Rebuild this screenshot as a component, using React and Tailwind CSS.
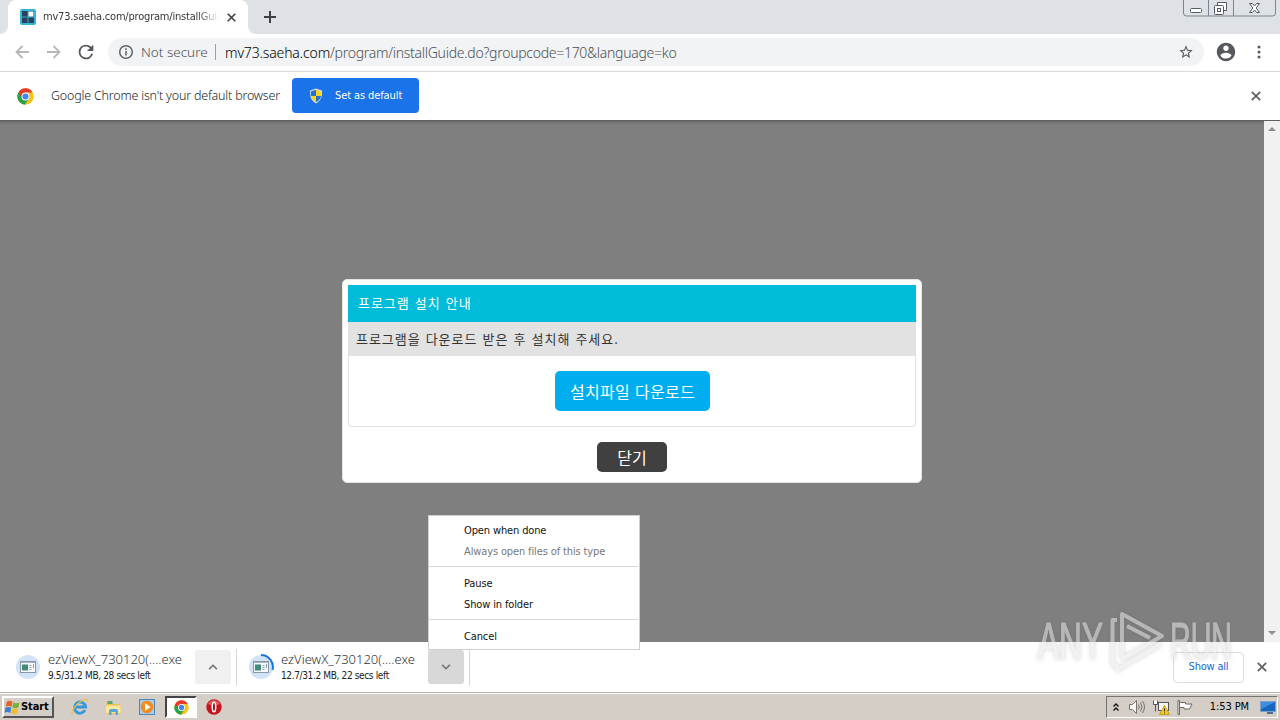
import React from 'react';

const ui = "font-['DejaVu_Sans_Condensed','Noto_Sans',sans-serif]";
const light = "font-['Noto_Sans','Open_Sans',sans-serif] font-light";
const korean = "font-['Noto_Sans_CJK_KR',sans-serif]";

const CloseIcon = ({ size = 10, color = '#5f6368', width = 1.8 }) => (
  <svg width={size} height={size} viewBox="0 0 10 10" fill="none" stroke={color} strokeWidth={width}>
    <path d="M.8.8 9.2 9.2M9.2.8.8 9.2" />
  </svg>
);

const ChromeLogo = ({ size = 17 }) => (
  <svg width={size} height={size} viewBox="0 0 24 24">
    <circle cx="12" cy="12" r="11.5" fill="#fbc116" />
    <path d="M12 12 2 6.3A11.5 11.5 0 0 0 11 23.5L17 14.8Z" fill="#28a249" />
    <path d="M12 6.5H22.1A11.5 11.5 0 0 0 2 6.2L7.3 14.7Z" fill="#e33b2e" />
    <circle cx="12" cy="12" r="5.6" fill="#fff" />
    <circle cx="12" cy="12" r="4.3" fill="#4285f4" />
  </svg>
);

const ShieldIcon = () => (
  <svg width="14" height="16" viewBox="0 0 14 16">
    <path d="M7 .5 13 2.5C13.5 9 11.5 13 7 15.5 2.5 13 .5 9 1 2.5Z" fill="#d5dbe0" />
    <path d="M7 1.8V8H1.9C1.7 6.4 1.8 5 1.9 3.5Z" fill="#2a70c8" />
    <path d="M7 1.8 12.1 3.5C12.2 5 12.3 6.4 12.1 8H7Z" fill="#f5d429" />
    <path d="M1.9 8H7V14.2C4.2 12.6 2.4 10.8 1.9 8Z" fill="#f5d429" />
    <path d="M7 8H12.1C11.6 10.8 9.8 12.6 7 14.2Z" fill="#2a70c8" />
  </svg>
);

const TabStrip = () => (
  <div className="flex h-[34px] bg-[#dee1e6]">
    <div className="w-2 bg-white">
      <div className="h-full rounded-br-lg bg-[#dee1e6]" />
    </div>
    <div className="flex w-[240px] items-center rounded-t-lg bg-white pl-3">
      <svg width="16" height="16" viewBox="0 0 16 16">
        <rect width="16" height="16" rx="2" fill="#35b6d8" />
        <rect x="2" y="2" width="12" height="12" fill="#27445c" />
        <path d="M8 2v12M2 8h12" stroke="#35a5c5" strokeWidth="1" />
        <rect x="8.5" y="2.5" width="5" height="5" fill="#fff" />
      </svg>
      <span className={`ml-[7px] w-[176px] overflow-hidden whitespace-nowrap pt-px text-[11px] tracking-[-0.2px] text-[#333639] [mask-image:linear-gradient(to_right,#000_88%,transparent)] ${ui}`}>
        mv73.saeha.com/program/installGuide.do
      </span>
      <span className="ml-2"><CloseIcon size={9} color="#3c4043" /></span>
    </div>
    <div className="w-2 bg-white">
      <div className="h-full rounded-bl-lg bg-[#dee1e6]" />
    </div>
    <svg className="ml-2 mt-[11px]" width="12" height="12" viewBox="0 0 12 12" stroke="#3c4043" strokeWidth="2">
      <path d="M6 0v12M0 6h12" />
    </svg>
    <svg className="ml-auto mr-[3px]" width="94" height="17" viewBox="0 0 94 17" fill="none" stroke="#7c838e">
      <path d="M.5 0v13q0 3 3 3h86q3 0 3-3V0M25.500 0v16M50.500 0v16" />
      <g stroke="#555b66">
        <rect x="7.500" y="8.500" width="11" height="4" rx="1" fill="#fff" />
        <path d="M34.500 5.500V2.500h9v8h-3" fill="#fff" />
        <rect x="31.500" y="5.500" width="9" height="9" rx="1" fill="#fff" />
        <rect x="34.500" y="8.500" width="3" height="3" />
        <path d="M66.500 3.500h3l2 2.500 2-2.500h3l-3.300 4.500 3.300 4.500h-3l-2-2.500-2 2.500h-3l3.300-4.500Z" fill="#fff" />
      </g>
    </svg>
  </div>
);

const Toolbar = () => (
  <div className="flex h-[38px] items-center border-b border-[#d8d9dc] bg-white pl-[15px] pb-px">
    <svg width="14" height="14" viewBox="0 0 14 14" fill="none" stroke="#b5b7b9" strokeWidth="1.8">
      <path d="M14 7H1.500M7.500 1 1.500 7l6 6" />
    </svg>
    <svg className="ml-[18px]" width="14" height="14" viewBox="0 0 14 14" fill="none" stroke="#b5b7b9" strokeWidth="1.8">
      <path d="M0 7h12.500M6.500 1l6 6-6 6" />
    </svg>
    <svg className="ml-[14px]" width="22" height="22" viewBox="0 0 24 24" fill="#55585c">
      <path d="M17.650 6.350A7.960 7.960 0 0 0 12 4a8 8 0 1 0 7.730 10h-2.080A6 6 0 1 1 12 6c1.660 0 3.140.69 4.220 1.780L13 11h7V4z" />
    </svg>
    <div className="ml-[11px] flex h-7 w-[1096px] items-center rounded-full bg-[#f1f3f4] pl-[10px] pr-[10px]">
      <svg width="16" height="16" viewBox="0 0 16 16" fill="none" stroke="#5f6368" strokeWidth="1.500">
        <circle cx="8" cy="8" r="6.300" />
        <path d="M8 7v4.500M8 4.300v1.700" />
      </svg>
      <span className={`ml-[7px] w-[68px] whitespace-nowrap text-[13.500px] text-[#4c5054] ${light}`}>Not secure</span>
      <div className="ml-[6px] h-4 w-px bg-[#9aa0a6]" />
      <span className={`ml-[9px] whitespace-nowrap text-[14px] tracking-[-0.28px] text-[#4c5054] ${light}`}>
        <span className="tracking-[-0.14px] text-black">mv73.saeha.com</span>/program/installGuide.do?groupcode=170&amp;language=ko
      </span>
      <svg className="ml-auto" width="16" height="16" viewBox="0 0 24 24" fill="#55585c">
        <path d="M22 9.240l-7.190-.62L12 2 9.190 8.630 2 9.240l5.460 4.730L5.820 21 12 17.270 18.180 21l-1.630-7.030L22 9.240zM12 15.400l-3.760 2.270 1-4.280-3.320-2.880 4.380-.38L12 6.100l1.710 4.040 4.380.38-3.320 2.880 1 4.280L12 15.400z" />
      </svg>
    </div>
    <svg className="ml-[11px]" width="22" height="22" viewBox="0 0 24 24" fill="#55585c">
      <path d="M12 2C6.480 2 2 6.480 2 12s4.480 10 10 10 10-4.480 10-10S17.520 2 12 2zm0 3c1.660 0 3 1.340 3 3s-1.340 3-3 3-3-1.340-3-3 1.340-3 3-3zm0 14.200a7.200 7.200 0 0 1-6-3.220c.03-1.990 4-3.080 6-3.080s5.970 1.090 6 3.080a7.200 7.200 0 0 1-6 3.220z" />
    </svg>
    <svg className="ml-[20px]" width="4" height="14" viewBox="0 0 4 14" fill="#55585c">
      <circle cx="2" cy="2" r="1.500" />
      <circle cx="2" cy="7" r="1.500" />
      <circle cx="2" cy="12" r="1.500" />
    </svg>
  </div>
);

const InfoBar = () => (
  <div className="flex h-[48px] items-center bg-white pl-[17px] pr-[19px]">
    <ChromeLogo />
    <span className={`ml-[17px] w-[229px] whitespace-nowrap text-[12.5px] tracking-[-0.2px] text-[#202326] ${light}`}>
      Google Chrome isn't your default browser
    </span>
    <button className={`-mt-px ml-[12px] flex h-[35px] w-[127px] items-center rounded bg-[#1a73e8] pl-[17px] text-[11px] text-white ${ui}`}>
      <ShieldIcon />
      <span className="ml-3 whitespace-nowrap pt-px tracking-[-0.1px]">Set as default</span>
    </button>
    <span className="ml-auto"><CloseIcon /></span>
  </div>
);

const InstallDialog = () => (
  <div className={`h-[204px] w-[580px] rounded-[5px] border border-[#e4e4e4] bg-white px-[5px] pt-[5px] ${korean}`}>
    <div className="flex h-[37px] items-center bg-[#00bcd8] pb-px pl-[10px] text-[13px] tracking-[0.95px] text-white [word-spacing:1.3px]">
      프로그램 설치 안내
    </div>
    <div className="h-[105px] rounded-b-sm border border-t-0 border-[#e1e1e1]">
      <div className="flex h-[34px] items-center bg-[#e2e2e2] pb-px pl-[7px] text-[13px] tracking-[0.95px] text-[#333] [word-spacing:1.3px]">
        프로그램을 다운로드 받은 후 설치해 주세요.
      </div>
      <button className="mx-auto mt-[15px] block h-[40px] w-[155px] rounded-[5px] bg-[#00aeef] pl-px text-[16px] tracking-[0.3px] text-white [word-spacing:1px]">
        설치파일 다운로드
      </button>
    </div>
    <button className="mx-auto mt-[15px] block h-[30px] w-[70px] rounded-[5px] bg-[#404040] text-[16px] leading-[30px] text-white">
      닫기
    </button>
  </div>
);

const Page = () => (
  <div className="flex h-[522px] border-t border-[#606060] bg-[#7f7f7f]">
    <div className="flex flex-1 items-center justify-center pb-px shadow-[inset_0_3px_3px_-2px_#606060]">
      <InstallDialog />
    </div>
    <div className="flex w-4 flex-col items-center justify-between bg-[#f1f1f1] pb-[7px] pt-[6px]">
      <svg width="8" height="4" viewBox="0 0 8 4" fill="#8d8d8d"><path d="M0 4 4 0l4 4Z" /></svg>
      <svg width="8" height="4" viewBox="0 0 8 4" fill="#8d8d8d"><path d="M0 0h8L4 4Z" /></svg>
    </div>
  </div>
);

const Download = ({ progress, arc, open }) => (
  <div className="flex h-full items-center">
    <svg width="26" height="26" viewBox="0 0 26 26" fill="none">
      <circle cx="13" cy="13" r="12" fill="#d2e3f8" />
      <path d={arc} stroke="#1a73e8" strokeWidth="2" />
      <rect x="5.500" y="7.500" width="15" height="11" fill="#f7fafb" stroke="#8b98a5" />
      <path d="M6 8.500h14" stroke="#a5b3c2" />
      <rect x="7" y="10.500" width="6" height="6" fill="#448a79" />
      <path d="M14.500 11.500h2M14.500 13.500h2M14.500 15.500h2M18.500 10v4" stroke="#8d9eae" />
    </svg>
    <div className="ml-[7px] w-[147px]">
      <div className={`whitespace-nowrap text-[13px] leading-[16px] text-[#303336] ${light}`}>ezViewX_730120(....exe</div>
      <div className={`whitespace-nowrap text-[10px] leading-[17px] tracking-[-0.36px] text-[#202124] ${ui}`}>{progress}</div>
    </div>
    <div className={`flex h-[34px] w-9 items-center justify-center rounded-[3px] ${open ? 'bg-[#d8d8d8]' : 'bg-[#f0f0f0]'}`}>
      <svg width="10" height="6" viewBox="0 0 11 7" fill="none" stroke="#707376" strokeWidth="1.800">
        <path d={open ? 'M1 1l4.500 4.500L10 1' : 'M1 6l4.500-4.500L10 6'} />
      </svg>
    </div>
  </div>
);

const DownloadShelf = () => (
  <div className="flex h-[50px] items-center bg-white pl-[15px]">
    <Download progress="9.5/31.2 MB, 28 secs left" />
    <div className="ml-[5px] mr-[11px] h-[37px] w-px bg-[#d5d5d5]" />
    <Download progress="12.7/31.2 MB, 22 secs left" arc="M13 1a12 12 0 0 1 11.500 15" open />
    <div className="ml-[5px] h-[37px] w-px bg-[#d5d5d5]" />
    <button className={`ml-auto h-[31px] w-[71px] rounded border border-[#dadce0] pt-px text-[11px] tracking-[-0.2px] text-[#1967d2] ${ui}`}>
      Show all
    </button>
    <span className="ml-[13px] mr-[13px]"><CloseIcon /></span>
  </div>
);

const menuGroups = [
  [{ label: 'Open when done' }, { label: 'Always open files of this type', disabled: true }],
  [{ label: 'Pause' }, { label: 'Show in folder' }],
  [{ label: 'Cancel' }],
];

const DownloadMenu = () => (
  <div className={`absolute left-[428px] top-[515px] h-[135px] w-[212px] border border-[#cfcfcf] bg-white text-[11px] tracking-[-0.13px] ${ui}`}>
    {menuGroups.map((group, i) => (
      <div key={i} className={i > 0 ? 'mr-px border-t border-[#d6d6d6] pt-[6px] pb-[4px]' : 'pt-[4px] pb-[4px]'}>
        {group.map(item => (
          <div key={item.label} className={`h-[21px] whitespace-nowrap pl-[35px] leading-[21px] ${item.disabled ? 'text-[#777]' : 'text-[#111]'}`}>
            {item.label}
          </div>
        ))}
      </div>
    ))}
  </div>
);

const Taskbar = () => (
  <div className={`flex h-[28px] items-center border-t border-[#b9b5af] bg-[#d5cec6] pl-[2px] shadow-[inset_0_1px_0_#fff] ${ui}`}>
    <button className="mt-px flex h-[22px] w-[52px] items-center border-2 border-b-[#555] border-l-white border-r-[#555] border-t-white text-[11px] font-bold text-black">
      <svg width="17" height="17" viewBox="0 0 15 15">
        <path d="M2.500 2.500Q5 .8 7.500 2.500L6.600 7Q4 5.400 1.500 6.900Z" fill="#e8622a" />
        <path d="M8.200 2.900q2.500 1.500 5.500 0L12.700 7.400q-2.800 1.400-5.300-.2Z" fill="#75b43c" />
        <path d="M1.300 7.700q2.600-1.500 5.100.1L5.500 12.300Q3 10.700.4 12.200Z" fill="#3a7fd0" />
        <path d="M7.200 8q2.600 1.600 5.300.2L11.500 12.700q-2.800 1.400-5.300-.3Z" fill="#f4bc2c" />
      </svg>
      <span className="tracking-[-0.1px]">Start</span>
    </button>
    <svg className="ml-[17px]" width="18" height="18" viewBox="0 0 18 18" fill="none">
      <path d="M14 12.200A5.600 5.600 0 1 1 14.600 9H5" stroke="#3298dc" strokeWidth="2.800" />
      <path d="M1.500 16.200C-1 13.500 5 6 11 2.800 15 .5 17.700 1.200 16.500 4" stroke="#eec044" strokeWidth="1.300" />
    </svg>
    <svg className="ml-[16px] mt-[2px]" width="17" height="16" viewBox="0 0 17 16">
      <path d="M1 2.500h5l1 1.500h8.500V14H1Z" fill="#e9c45c" />
      <path d="M2.500 1h5v3h-5Z" fill="#59a96c" />
      <path d="M1 5.500h14.500V13H1Z" fill="#f9e6a0" />
      <path d="M4 15v-4q0-2 2-2h5q2 0 2 2v4h-2.500v-3h-4v3Z" fill="#58a9d9" />
    </svg>
    <svg className="ml-[17px]" width="16" height="16" viewBox="0 0 16 16">
      <rect x=".5" y=".5" width="15" height="15" fill="#a9cde8" stroke="#4f88b8" />
      <circle cx="8" cy="8" r="6.200" fill="#f28a1a" />
      <path d="M6 4.300 11.700 8 6 11.700Z" fill="#fff" />
    </svg>
    <div className="ml-[10px] mt-px flex h-[22px] w-[32px] items-center justify-center border-2 border-b-white border-l-[#444] border-r-white border-t-[#444] bg-white">
      <ChromeLogo size={15} />
    </div>
    <svg className="ml-[9px] mt-px" width="16" height="16" viewBox="0 0 16 16">
      <circle cx="8" cy="8" r="7.700" fill="#c41420" />
      <path d="M2 5a6.700 6.700 0 0 1 12 0Q8 8 2 5Z" fill="#e05a5a" />
      <ellipse cx="8" cy="8" rx="1.700" ry="4.800" fill="#9d0912" stroke="#fff" strokeWidth="1.500" />
    </svg>
    <div className="ml-auto mr-[2px] mt-px flex h-[22px] w-[172px] items-center border border-b-white border-l-[#77736e] border-r-white border-t-[#77736e] pl-[6px]">
      <svg width="6" height="9" viewBox="0 0 6 9" fill="none" stroke="#111" strokeWidth="1.300">
        <path d="M.5 3.500 3 1l2.500 2.500M.5 7.500 3 5l2.500 2.500" />
      </svg>
      <svg className="ml-[10px]" width="17" height="14" viewBox="0 0 17 14" fill="none" stroke="#77746f">
        <path d="M.5 4.500h3l4-4v13l-4-4h-3Z" fill="#fafafa" />
        <path d="M9.500 4.500q1.600 2.500 0 5M11.500 2.500q3 4.500 0 9M13.500 1q4 6 0 12" />
      </svg>
      <svg className="ml-[7px]" width="17" height="15" viewBox="0 0 17 15" fill="none" stroke="#555">
        <rect x="5.500" y="2.500" width="10" height="8" fill="#f4f4f4" />
        <path d="M7.500 13.500h5M10 11v2" />
        <path d="M.5.500v4h4v-4M2.500 4.500v7" stroke="#555" fill="#fff" />
        <path d="M11.500 5.500 16.500 14.500h-10Z" fill="#f6cc24" stroke="#c89c12" />
        <path d="M11.500 8.500v3M11.500 12.500v1" stroke="#222" />
      </svg>
      <svg className="ml-[7px]" width="16" height="15" viewBox="0 0 16 15" stroke="#6d6a66" fill="#fff">
        <path d="M1 .5h1.500v14H1Z" />
        <path d="M2.500 2.500h6v1.500h6.500l-2.500 5H7V7.500H2.500Z" />
      </svg>
      <span className="ml-auto whitespace-nowrap pt-px text-[11px] tracking-[-0.1px] text-black">1:53 PM</span>
      <svg className="ml-[11px] mr-px" width="16" height="13" viewBox="0 0 16 13">
        <rect x=".5" y=".5" width="15" height="10" fill="#1866bd" stroke="#7ba2c8" />
        <path d="M1 1h14L1 8Z" fill="#3e8fdd" />
        <path d="M7 12h6" stroke="#4e6d8c" strokeWidth="2" />
      </svg>
    </div>
  </div>
);

const Watermark = () => (
  <svg className="pointer-events-none absolute left-[1030px] top-[602px] opacity-55 drop-shadow-[0_0_2px_rgba(90,90,90,0.45)]" width="215" height="76" viewBox="0 0 215 76" fill="#e6e6e6">
    <g fontFamily="'Liberation Sans Narrow','Liberation Sans',sans-serif" fontSize="51" stroke="#e6e6e6" strokeWidth="1.2">
      <text x="8" y="57" textLength="65" lengthAdjust="spacingAndGlyphs">ANY</text>
      <text x="140" y="57" textLength="62" lengthAdjust="spacingAndGlyphs">RUN</text>
    </g>
    <g fill="none" stroke="#e6e6e6" strokeWidth="4" strokeLinejoin="round">
      <path d="M87 18h-4.500v44l4 2" />
      <path d="M97 24l23 12M92 57V12L132 34 92 57" />
      <path d="M87 62v6L131 42" />
    </g>
  </svg>
);

const App = () => {
  return (
    <div className="relative h-[720px] w-[1280px] overflow-hidden bg-white">
      <TabStrip />
      <Toolbar />
      <InfoBar />
      <Page />
      <DownloadShelf />
      <Taskbar />
      <DownloadMenu />
      <Watermark />
    </div>
  );
};

export default App;
